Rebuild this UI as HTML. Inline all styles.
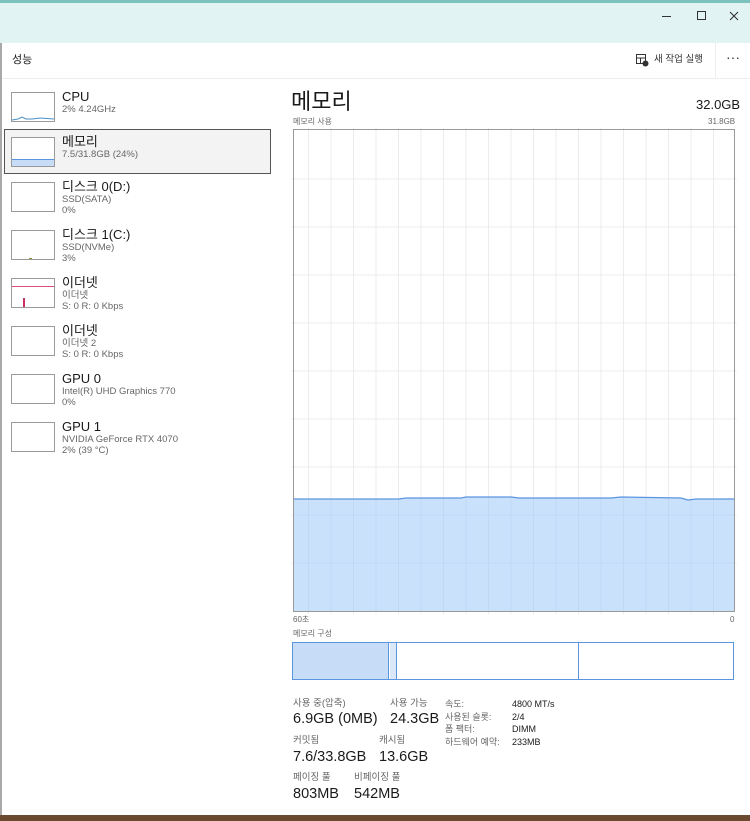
<!DOCTYPE html>
<html><head><meta charset="utf-8"><style>
*{margin:0;padding:0;box-sizing:border-box}
body{width:750px;height:821px;overflow:hidden;background:#6b4a30;font-family:"Liberation Sans","Noto Sans CJK KR",sans-serif;color:#1a1a1a;position:relative}
.win{position:absolute;left:0;top:0;width:750px;height:815px;background:#fff}
.title{position:absolute;left:0;top:0;width:750px;height:43px;background:#e1f4f3;border-top:3px solid #7cc3c0}
.hdr{position:absolute;top:43px;left:0;width:750px;height:36px;border-bottom:1px solid #ececec}
.abs{position:absolute;white-space:nowrap}
.item{position:absolute;left:10px;width:260px;height:46px}
.thumb{position:absolute;left:1px;top:2px;width:44px;height:30px;border:1px solid #9a9a9a;background:#fff}
.n{position:absolute;left:52px;top:-1px;font-size:13px;line-height:15px}
.s{position:absolute;left:52px;font-size:9.5px;line-height:11px;color:#666}
.lab{font-size:9.5px;color:#666;line-height:12px}
.big{font-size:14.5px;color:#1a1a1a;line-height:17px}
</style></head><body>
<div class="win">
<div class="title">
 <div class="abs" style="left:662px;top:13px;width:9px;height:1px;background:#333"></div>
 <div class="abs" style="left:697px;top:8px;width:9px;height:9px;border:1px solid #333"></div>
 <svg class="abs" style="left:729px;top:8px" width="10" height="10"><path d="M1,1 L9,9 M9,1 L1,9" stroke="#333" stroke-width="1.1"/></svg>
</div>
<div class="hdr">
 <div class="abs" style="left:12px;top:11px;font-size:11px;line-height:13px">성능</div>
 <svg class="abs" style="left:636px;top:11px" width="13" height="13" viewBox="0 0 13 13"><rect x="0.5" y="0.5" width="9" height="9" fill="none" stroke="#333"/><line x1="0.5" y1="4" x2="9.5" y2="4" stroke="#333"/><line x1="4.5" y1="4" x2="4.5" y2="9.5" stroke="#333"/><circle cx="9.5" cy="9.5" r="3" fill="#333"/></svg>
 <div class="abs" style="left:654px;top:11px;font-size:9.5px;line-height:12px;color:#333">새 작업 실행</div>
 <div class="abs" style="left:715px;top:0;width:1px;height:36px;background:#eee"></div>
 <div class="abs" style="left:726px;top:6px;font-size:14px;color:#333">···</div>
</div>
<div class="abs" style="left:0;top:43px;width:2px;height:772px;background:#a9a9a9"></div>

<div class="item" style="top:90px"><div class="thumb"><svg width="42" height="28"><polyline points="0,27 6,26 10,24 14,26 20,26 28,25 42,26" fill="none" stroke="#4a90c8" stroke-width="1"/></svg></div><div class="n">CPU</div><div class="s" style="top:14px">2% 4.24GHz</div></div>
<div class="abs" style="left:4px;top:129px;width:267px;height:45px;background:#f3f3f3;border:1px solid #555"></div>
<div class="item" style="top:135px"><div class="thumb"><div style="position:absolute;left:0;bottom:0;width:42px;height:7px;background:#c7ddf7;border-top:1px solid #5b95e0"></div></div><div class="n">메모리</div><div class="s" style="top:14px">7.5/31.8GB (24%)</div></div>
<div class="item" style="top:180px"><div class="thumb"></div><div class="n">디스크 0(D:)</div><div class="s" style="top:14px">SSD(SATA)</div><div class="s" style="top:25px">0%</div></div>
<div class="item" style="top:228px"><div class="thumb"><div style="position:absolute;left:17px;bottom:0;width:3px;height:1px;background:#7a9a3a"></div></div><div class="n">디스크 1(C:)</div><div class="s" style="top:14px">SSD(NVMe)</div><div class="s" style="top:25px">3%</div></div>
<div class="item" style="top:276px"><div class="thumb"><div style="position:absolute;left:0;top:7px;width:42px;height:1px;background:#d8507a"></div><div style="position:absolute;left:11px;bottom:0;width:2px;height:9px;background:#c8306a"></div></div><div class="n">이더넷</div><div class="s" style="top:14px">이더넷</div><div class="s" style="top:25px">S: 0 R: 0 Kbps</div></div>
<div class="item" style="top:324px"><div class="thumb"></div><div class="n">이더넷</div><div class="s" style="top:14px">이더넷 2</div><div class="s" style="top:25px">S: 0 R: 0 Kbps</div></div>
<div class="item" style="top:372px"><div class="thumb"></div><div class="n">GPU 0</div><div class="s" style="top:14px">Intel(R) UHD Graphics 770</div><div class="s" style="top:25px">0%</div></div>
<div class="item" style="top:420px"><div class="thumb"></div><div class="n">GPU 1</div><div class="s" style="top:14px">NVIDIA GeForce RTX 4070</div><div class="s" style="top:25px">2% (39 °C)</div></div>

<div class="abs" style="left:291px;top:88px;font-size:22px;line-height:28px">메모리</div>
<div class="abs" style="left:696px;top:97px;font-size:13px;line-height:16px">32.0GB</div>
<div class="abs lab" style="left:293px;top:117px;font-size:8px;line-height:10px">메모리 사용</div>
<div class="abs lab" style="left:708px;top:117px;font-size:8px;line-height:10px">31.8GB</div>
<svg class="abs" style="left:291px;top:128px" width="446" height="486">
 <g stroke="#ececec" stroke-width="1">
  <line x1="17.5" y1="0" x2="17.5" y2="486"/><line x1="40" y1="0" x2="40" y2="486"/><line x1="62.5" y1="0" x2="62.5" y2="486"/><line x1="85" y1="0" x2="85" y2="486"/><line x1="107.5" y1="0" x2="107.5" y2="486"/><line x1="130" y1="0" x2="130" y2="486"/><line x1="152.5" y1="0" x2="152.5" y2="486"/><line x1="175" y1="0" x2="175" y2="486"/><line x1="197.5" y1="0" x2="197.5" y2="486"/><line x1="220" y1="0" x2="220" y2="486"/><line x1="242.5" y1="0" x2="242.5" y2="486"/><line x1="265" y1="0" x2="265" y2="486"/><line x1="287.5" y1="0" x2="287.5" y2="486"/><line x1="310" y1="0" x2="310" y2="486"/><line x1="332.5" y1="0" x2="332.5" y2="486"/><line x1="355" y1="0" x2="355" y2="486"/><line x1="377.5" y1="0" x2="377.5" y2="486"/><line x1="400" y1="0" x2="400" y2="486"/><line x1="422.5" y1="0" x2="422.5" y2="486"/>
  <line x1="0" y1="51" x2="446" y2="51"/><line x1="0" y1="99" x2="446" y2="99"/><line x1="0" y1="147" x2="446" y2="147"/><line x1="0" y1="195" x2="446" y2="195"/><line x1="0" y1="243" x2="446" y2="243"/><line x1="0" y1="291" x2="446" y2="291"/><line x1="0" y1="339" x2="446" y2="339"/><line x1="0" y1="387" x2="446" y2="387"/><line x1="0" y1="435" x2="446" y2="435"/>
 </g>
 <path d="M2,371 L108,371 L115,370 L170,370 L175,369 L220,369 L228,370 L320,370 L330,369 L390,370 L397,372 L405,371 L443,371 L443,484 L2,484 Z" fill="rgba(150,195,250,0.5)" stroke="none"/>
 <polyline points="2,371 108,371 115,370 170,370 175,369 220,369 228,370 320,370 330,369 390,370 397,372 405,371 443,371" fill="none" stroke="#5b95e0" stroke-width="1.2"/>
 <rect x="2.5" y="1.5" width="441" height="482" fill="none" stroke="#999" stroke-width="1"/>
</svg>
<div class="abs lab" style="left:293px;top:615px;font-size:8px;line-height:10px">60초</div>
<div class="abs lab" style="left:730px;top:615px;font-size:8px;line-height:10px">0</div>
<div class="abs lab" style="left:293px;top:629px;font-size:8px;line-height:10px">메모리 구성</div>
<div class="abs" style="left:292px;top:642px;width:442px;height:38px;border:1px solid #5b95e0"></div>
<div class="abs" style="left:293px;top:643px;width:96px;height:36px;background:#c7ddf7;border-right:1px solid #5b95e0"></div>
<div class="abs" style="left:390px;top:643px;width:7px;height:36px;background:#dbe8f8;border-right:1px solid #5b95e0"></div>
<div class="abs" style="left:578px;top:643px;width:1px;height:36px;background:#5b95e0"></div>

<div class="abs lab" style="left:293px;top:698px">사용 중(압축)</div>
<div class="abs big" style="left:293px;top:711px">6.9GB (0MB)</div>
<div class="abs lab" style="left:390px;top:698px">사용 가능</div>
<div class="abs big" style="left:390px;top:711px">24.3GB</div>
<div class="abs lab" style="left:293px;top:735px">커밋됨</div>
<div class="abs big" style="left:293px;top:749px">7.6/33.8GB</div>
<div class="abs lab" style="left:379px;top:735px">캐시됨</div>
<div class="abs big" style="left:379px;top:749px">13.6GB</div>
<div class="abs lab" style="left:293px;top:772px">페이징 풀</div>
<div class="abs big" style="left:293px;top:786px">803MB</div>
<div class="abs lab" style="left:354px;top:772px">비페이징 풀</div>
<div class="abs big" style="left:354px;top:786px">542MB</div>

<div class="abs lab" style="left:445px;top:698px;line-height:12.5px;font-size:9px">속도:<br>사용된 슬롯:<br>폼 팩터:<br>하드웨어 예약:</div>
<div class="abs" style="left:512px;top:698px;line-height:12.5px;font-size:9px;color:#1a1a1a">4800 MT/s<br>2/4<br>DIMM<br>233MB</div>
</div>
</body></html>
